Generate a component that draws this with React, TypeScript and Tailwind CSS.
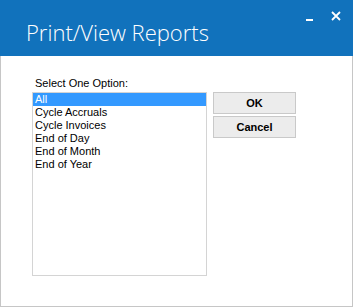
const options = ['All', 'Cycle Accruals', 'Cycle Invoices', 'End of Day', 'End of Month', 'End of Year']

export default function App() {
  return (
    <div className="w-[353px] h-[307px] bg-white flex flex-col overflow-hidden">
      <div className="h-[56px] bg-[#1172bc] flex items-start justify-between shrink-0">
        <div
          className="pl-[26px] pt-[18px] text-[22px] leading-[28px] font-light text-white"
          style={{ fontFamily: '"Open Sans", "Noto Sans", sans-serif' }}
        >
          Print/View Reports
        </div>
        <div className="flex items-start gap-[18px] pt-[11px] pr-[12px]">
          <div className="w-[7px] h-[2px] bg-white mt-[8px]" />
          <svg width="10" height="10" viewBox="0 0 10 10">
            <path d="M1 1 L9 9 M9 1 L1 9" stroke="white" strokeWidth="1.8" />
          </svg>
        </div>
      </div>
      <div
        className="flex-1 border-l border-r border-b border-[#c6c6c6] pl-[31px] pt-[20px]"
        style={{ fontFamily: '"Liberation Sans", Arial, sans-serif' }}
      >
        <div className="pl-[3px] text-[11px] leading-[15px] text-black">Select One Option:</div>
        <div className="flex gap-[6px] mt-[1px]">
          <div className="w-[175px] h-[184px] border border-[#d4d4d4] bg-white">
            {options.map((o, i) => (
              <div
                key={o}
                className={
                  'h-[13px] pl-[2px] text-[11px] leading-[13px] ' +
                  (i === 0 ? 'bg-[#3399ff] text-white' : 'text-black')
                }
              >
                {o}
              </div>
            ))}
          </div>
          <div className="flex flex-col gap-[2px]">
            <button className="w-[83px] h-[22px] bg-[#ececec] border border-[#c9c9c9] text-[11px] font-bold text-black">
              OK
            </button>
            <button className="w-[83px] h-[22px] bg-[#ececec] border border-[#c9c9c9] text-[11px] font-bold text-black">
              Cancel
            </button>
          </div>
        </div>
      </div>
    </div>
  )
}
